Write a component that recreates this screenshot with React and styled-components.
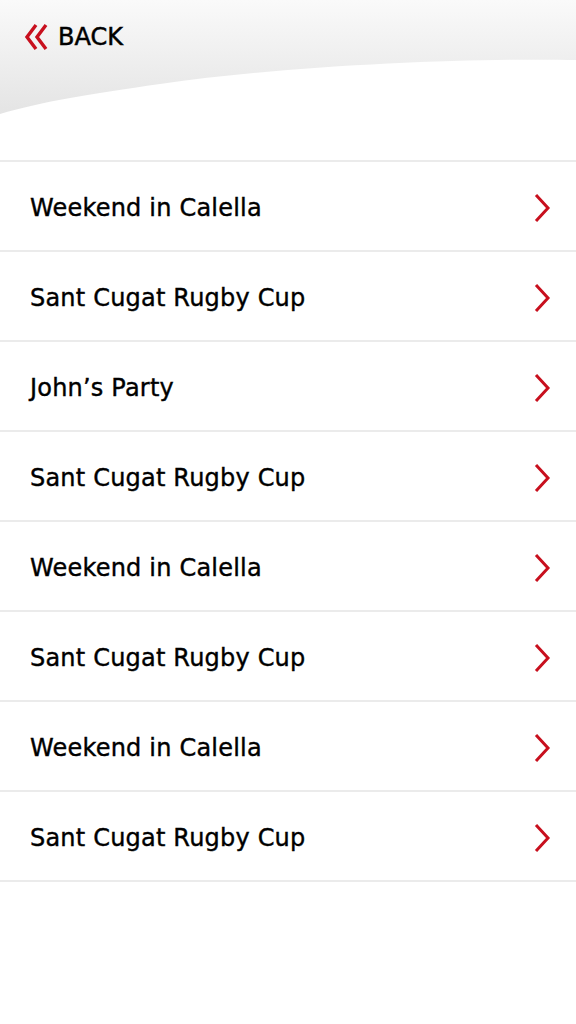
import React from "react";
import styled, { createGlobalStyle } from "styled-components";

const items = [
  "Weekend in Calella",
  "Sant Cugat Rugby Cup",
  "John’s Party",
  "Sant Cugat Rugby Cup",
  "Weekend in Calella",
  "Sant Cugat Rugby Cup",
  "Weekend in Calella",
  "Sant Cugat Rugby Cup",
];

const GlobalStyle = createGlobalStyle`
  html, body {
    margin: 0;
    padding: 0;
    background: #ffffff;
  }
  * {
    box-sizing: border-box;
  }
`;

export default function App() {
  return (
    <>
      <GlobalStyle />
      <Page>
        <Header>
          <Wave viewBox="0 0 576 160" preserveAspectRatio="none">
            <defs>
              <linearGradient id="hdr" x1="0" y1="0" x2="0" y2="1">
                <stop offset="0" stopColor="#fafafa" />
                <stop offset="1" stopColor="#e4e4e4" />
              </linearGradient>
            </defs>
            <path
              d="M0 0 H576 V60 C480 58 300 64 160 84 C90 94 40 102 0 114 Z"
              fill="url(#hdr)"
            />
          </Wave>
          <BackLink href="#">
            <svg width="26" height="28" viewBox="0 0 26 28">
              <path
                d="M12 2 L3 14 L12 26 M22 2 L13 14 L22 26"
                fill="none"
                stroke="#c8101e"
                strokeWidth="3.4"
              />
            </svg>
            <span>BACK</span>
          </BackLink>
        </Header>
        <List>
          {items.map((label, i) => (
            <Row key={i}>
              <Label>{label}</Label>
              <svg width="18" height="30" viewBox="0 0 18 30">
                <path
                  d="M3 2 L15 15 L3 28"
                  fill="none"
                  stroke="#c8101e"
                  strokeWidth="3"
                />
              </svg>
            </Row>
          ))}
        </List>
      </Page>
    </>
  );
}

const Page = styled.div`
  width: 576px;
  min-height: 1024px;
  background: #ffffff;
  font-family: "DejaVu Sans", "Liberation Sans", sans-serif;
  color: #000000;
`;

const Header = styled.header`
  position: relative;
  height: 160px;
  padding: 23px 24px;
`;

const Wave = styled.svg`
  position: absolute;
  inset: 0;
  width: 100%;
  height: 100%;
`;

const BackLink = styled.a`
  position: relative;
  display: inline-flex;
  align-items: center;
  gap: 8px;
  color: #000000;
  text-decoration: none;
  font-size: 24px;
  -webkit-text-stroke: 0.5px #000000;
`;

const List = styled.ul`
  list-style: none;
  margin: 0;
  padding: 0;
  border-top: 2px solid #ebebeb;
`;

const Row = styled.li`
  display: flex;
  align-items: center;
  justify-content: space-between;
  height: 90px;
  padding: 3px 25px 0 30px;
  border-bottom: 2px solid #ebebeb;
`;

const Label = styled.span`
  font-size: 24px;
  letter-spacing: 0.2px;
  -webkit-text-stroke: 0.4px #000000;
`;
